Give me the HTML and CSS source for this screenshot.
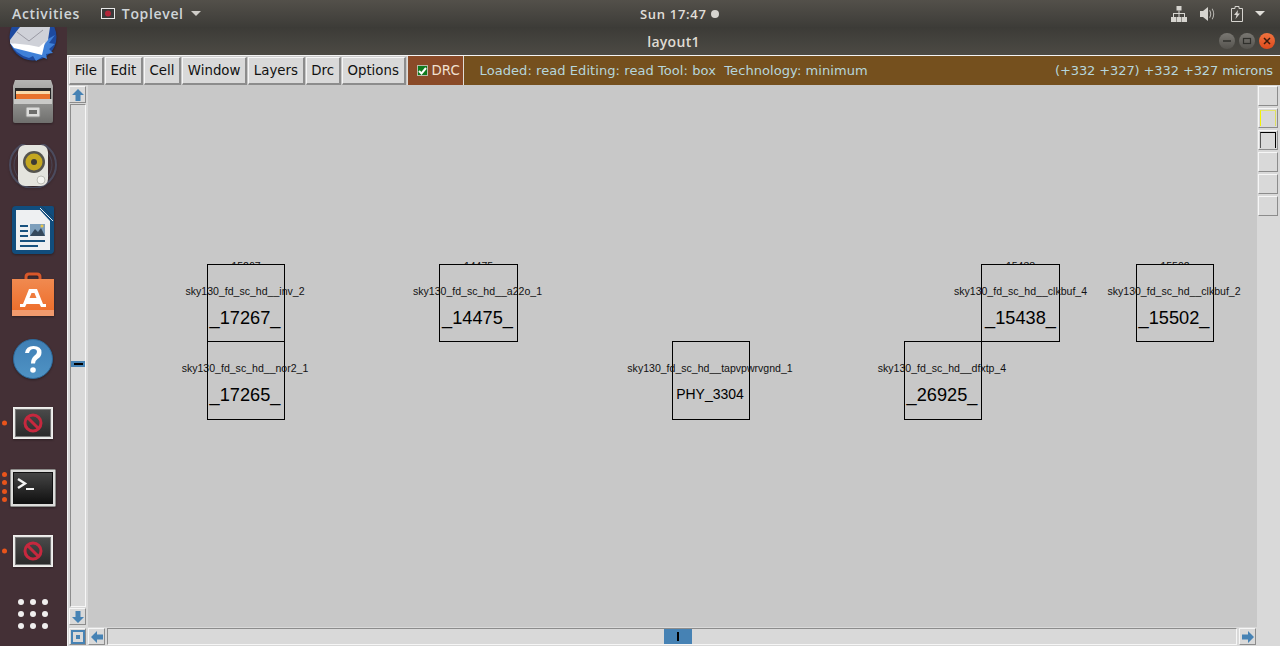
FILE: index.html
```html
<!DOCTYPE html>
<html lang="en">
<head>
<meta charset="utf-8">
<title>layout1</title>
<link rel="stylesheet" href="styles.css">
</head>
<body>
<header class="topbar">
  <div class="tb-left">
    <span class="tb-text">Activities</span>
    <span class="tb-app">
      <svg class="tb-appicon" width="14" height="11" viewBox="0 0 14 11"><rect x=".5" y=".5" width="13" height="10" fill="#3a3a3a" stroke="#e8e8e8"/><circle cx="7" cy="5.5" r="3" fill="#b3263a"/></svg>
      <span class="tb-text">Toplevel</span>
      <svg width="10" height="5" viewBox="0 0 10 5"><path d="M0 0h10L5 5z" fill="#cfcdc8"/></svg>
    </span>
  </div>
  <div class="tb-clock"><span>Sun 17:47</span><i class="tb-dot"></i></div>
  <div class="tb-right">
    <svg width="16" height="16" viewBox="0 0 16 16" fill="#d6d4cf"><path d="M5.500 0h5v4.500h-5zM0 11h5v5H0zM5.500 11h5v5h-5zM11 11h5v5h-5z"/><path d="M7.500 4.500h1V7H14v4h-1V8H8.500v3h-1V8H3v3H2V7h5.500z"/></svg>
    <svg width="16" height="14" viewBox="0 0 16 14" fill="#d6d4cf"><path d="M0 4h3l5-4v14l-5-4H0z"/><path d="M10 3q2.500 4 0 8l-.800-.500q2-3.500 0-7zM12.500 1.500q3.500 5.500 0 11l-.800-.500q3-5 0-10z" opacity=".8"/></svg>
    <svg class="tb-batt" width="12" height="16" viewBox="0 0 12 16"><path d="M4 .5h4v2h3.500v13H.5v-13H4z" fill="none" stroke="#d6d4cf"/><path d="M7 4 3 9h2.500L4.500 13 9 7.500H6.500z" fill="#d6d4cf"/></svg>
    <svg width="10" height="5" viewBox="0 0 10 5"><path d="M0 0h10L5 5z" fill="#e0ded9"/></svg>
  </div>
</header>

<div class="desktop">
  <nav class="dock">
    <div class="dock-item dock-clip">
      <svg class="tbird" width="48" height="36" viewBox="0 0 48 36"><circle cx="24" cy="10" r="23.500" fill="#1d4aa0"/><path d="M1 16Q6 27 20 31l4-2 3 5 6-4 5 2-1-5 7-1-4-4 6-5-6-1 6-8-14 8-12 6z" fill="#3f80d8"/><path d="M1 13 7 5 11 0H41L39 13 31 23 1 16z" fill="#cfd1d8"/><path d="M8 5 20 14 34 3" fill="none" stroke="#9a9aa4"/><path d="M1 16 5 21 33 28 36 15 30 20 20 18z" fill="#fff"/></svg>
    </div>
    <div class="dock-item">
      <svg width="42" height="44" viewBox="0 0 42 44"><defs><linearGradient id="cab" x1="0" y1="0" x2="0" y2="1"><stop offset="0" stop-color="#b5b5b3"/><stop offset="1" stop-color="#6f6f6d"/></linearGradient></defs><path d="M3 0h36l2 6v35q0 2-2 2H3q-2 0-2-2V6z" fill="url(#cab)"/><rect x="3" y="8" width="36" height="13" fill="#262626"/><rect x="4" y="11" width="34" height="4" fill="#f9d9a8"/><rect x="4" y="14" width="34" height="7" fill="#e8722b"/><rect x="2" y="19" width="38" height="5" fill="#c9c9c7"/><rect x="14" y="27" width="14" height="10" rx="1" fill="#dcdcda" stroke="#8c8c8a"/><rect x="17" y="30" width="8" height="4" fill="#6d6d6b"/></svg>
    </div>
    <div class="dock-item">
      <svg width="48" height="44" viewBox="0 0 48 44"><circle cx="24" cy="21" r="23" fill="none" stroke="#5a6c8c" stroke-width="2" opacity=".5"/><circle cx="24" cy="21" r="19" fill="none" stroke="#5a6c8c" opacity=".4"/><rect x="9" y="1" width="30" height="41" rx="7" fill="#e4e4de"/><circle cx="25" cy="18" r="11" fill="#55544e"/><circle cx="25" cy="18" r="8.500" fill="#c4a720"/><circle cx="25" cy="18" r="3" fill="#3c3b35"/><circle cx="32" cy="36" r="4" fill="#f4f4f0" stroke="#bdbdb6"/></svg>
    </div>
    <div class="dock-item">
      <svg width="42" height="48" viewBox="0 0 42 48"><path d="M4 0h26l12 12v32q0 4-4 4H4q-4 0-4-4V4q0-4 4-4z" fill="#114d7d"/><path d="M30 0h10q2 0 2 2v10z" fill="#114d7d"/><path d="M4 4h24l10 11v29H4z" fill="#eef0f2"/><path d="M28 2 41 15" stroke="#eef0f2" stroke-width="1"/><path d="M8 19h8v2H8zM8 24h8v2H8zM8 29h8v2H8zM8 34h25v2H8zM8 39h18v2H8z" fill="#18527f"/><rect x="18" y="18" width="15" height="12" fill="#7d9fbc"/><path d="M18 30l5-7 3 3 3-4 4 8z" fill="#35495c"/><circle cx="30" cy="20" r="1.500" fill="#e8c64c"/></svg>
    </div>
    <div class="dock-item">
      <svg width="42" height="44" viewBox="0 0 42 44"><defs><linearGradient id="bag" x1="0" y1="0" x2="0" y2="1"><stop offset="0" stop-color="#f08a50"/><stop offset="1" stop-color="#ee6a26"/></linearGradient></defs><path d="M14 10V5q0-3 3-3h8q3 0 3 3v5" fill="none" stroke="#d8572a" stroke-width="3"/><rect y="7" width="42" height="37" fill="url(#bag)"/><rect y="38" width="42" height="6" fill="#f19a6d"/><path d="M17 17h8l6 15h3v3h-5l-1.500-3h-13L13 35H8v-3h3zM19.500 21l-2 5h7l-2-5z" fill="#fff"/></svg>
    </div>
    <div class="dock-item">
      <svg class="nudge" width="40" height="40" viewBox="0 0 40 40"><defs><linearGradient id="hlp" x1="0" y1="0" x2="0" y2="1"><stop offset="0" stop-color="#3f7fb5"/><stop offset="1" stop-color="#4f93c4"/></linearGradient></defs><circle cx="20" cy="20" r="19.500" fill="url(#hlp)" stroke="#2e6a9b"/><path d="M12 14q1-7 8.500-7 8 0 8 6.500 0 4-4 6.500-2.500 1.500-2.500 4.500h-4q0-5 3-7.500 3-2 3-4 0-3-3.500-3t-4.500 4z" fill="#fff"/><circle cx="20" cy="31" r="2.800" fill="#fff"/></svg>
    </div>
    <div class="dock-item">
      <i class="pips"><b></b></i>
      <svg class="nudge" width="40" height="32" viewBox="0 0 40 32"><use href="#nosign"/></svg>
    </div>
    <div class="dock-item">
      <i class="pips"><b></b><b></b><b></b><b></b></i>
      <svg class="nudge-more" width="46" height="38" viewBox="0 0 46 38"><defs><linearGradient id="term" x1="0" y1="0" x2="0" y2="1"><stop offset="0" stop-color="#454545"/><stop offset="1" stop-color="#111"/></linearGradient></defs><rect x=".5" y=".5" width="45" height="37" rx="1" fill="#dcdcda" stroke="#8c8c8a"/><rect x="3" y="3" width="40" height="32" fill="#111"/><rect x="4" y="4" width="38" height="30" fill="url(#term)"/><path d="M8 10 15 14.500 8 19" fill="none" stroke="#f2f2f2" stroke-width="2.400"/><rect x="16" y="19" width="8" height="2" fill="#f2f2f2"/></svg>
    </div>
    <div class="dock-item">
      <i class="pips"><b></b></i>
      <svg class="nudge" width="40" height="32" viewBox="0 0 40 32"><use href="#nosign"/></svg>
    </div>
    <div class="dock-grid"><i></i><i></i><i></i><i></i><i></i><i></i><i></i><i></i><i></i></div>
    <svg class="defs" width="0" height="0"><defs><linearGradient id="nsg" x1="0" y1="0" x2="0" y2="1"><stop offset="0" stop-color="#4a4a4a"/><stop offset="1" stop-color="#2a2a2a"/></linearGradient><g id="nosign"><rect x=".5" y=".5" width="39" height="31" fill="#e6e6e4" stroke="#f0f0ee"/><rect x="2.500" y="2.500" width="35" height="27" fill="url(#nsg)" stroke="#777"/><circle cx="20" cy="16" r="8" fill="none" stroke="#c6283e" stroke-width="3"/><path d="M14.500 10.500 25.500 21.500" stroke="#c6283e" stroke-width="3"/></g></defs></svg>
  </nav>

  <main class="window">
    <div class="titlebar">
      <span class="title">layout1</span>
      <div class="wm">
        <span class="wm-btn"><svg width="10" height="10" viewBox="0 0 10 10"><path d="M1 5h8" stroke="#2f2f2b" stroke-width="1.500"/></svg></span>
        <span class="wm-btn"><svg width="10" height="10" viewBox="0 0 10 10"><rect x="1.500" y="2.500" width="7" height="5" fill="none" stroke="#2f2f2b" stroke-width="1.200"/></svg></span>
        <span class="wm-btn wm-close"><svg width="10" height="10" viewBox="0 0 10 10"><path d="M2 2 8 8M8 2 2 8" stroke="#3a1a0c" stroke-width="1.500"/></svg></span>
      </div>
    </div>
    <div class="app">
      <div class="menubar">
        <span class="menu">File</span>
        <span class="menu">Edit</span>
        <span class="menu">Cell</span>
        <span class="menu">Window</span>
        <span class="menu">Layers</span>
        <span class="menu">Drc</span>
        <span class="menu">Options</span>
        <span class="drc"><i class="check"><svg width="9" height="8" viewBox="0 0 9 8"><path d="M1 4 3.500 6.500 8 1" fill="none" stroke="#fff" stroke-width="2"/></svg></i>DRC</span>
        <div class="status">
          <span class="status-left">Loaded: read Editing: read Tool: box&nbsp; Technology: minimum</span>
          <span class="status-right">(+332 +327) +332 +327 microns</span>
        </div>
      </div>
      <div class="work">
        <div class="vscroll">
          <span class="arrow"><svg width="14" height="14" viewBox="0 0 14 14"><path d="M7 1 13 7H9.500V13H4.500V7H1z" fill="#4682b4"/></svg></span>
          <div class="vtrough"><span class="vthumb"><i></i></span></div>
          <span class="arrow"><svg width="14" height="14" viewBox="0 0 14 14"><path d="M7 13 13 7H9.500V1H4.500V7H1z" fill="#4682b4"/></svg></span>
        </div>
        <div class="canvas">
          <div class="cell c1"><span class="tick">15267</span><span class="cell-type">sky130_fd_sc_hd__inv_2</span><span class="cell-name">_17267_</span></div>
          <div class="cell c2"><span class="tick">14475</span><span class="cell-type">sky130_fd_sc_hd__a22o_1</span><span class="cell-name">_14475_</span></div>
          <div class="cell c3"><span class="tick">15438</span><span class="cell-type">sky130_fd_sc_hd__clkbuf_4</span><span class="cell-name">_15438_</span></div>
          <div class="cell c4"><span class="tick">15502</span><span class="cell-type">sky130_fd_sc_hd__clkbuf_2</span><span class="cell-name">_15502_</span></div>
          <div class="cell c5"><span class="cell-type">sky130_fd_sc_hd__nor2_1</span><span class="cell-name">_17265_</span></div>
          <div class="cell c6"><span class="cell-type">sky130_fd_sc_hd__tapvpwrvgnd_1</span><span class="cell-name small">PHY_3304</span></div>
          <div class="cell c7"><span class="cell-type">sky130_fd_sc_hd__dfxtp_4</span><span class="cell-name">_26925_</span></div>
        </div>
        <div class="tools">
          <span class="tool"></span>
          <span class="tool"><i class="swatch yellow"></i></span>
          <span class="tool"><i class="swatch black"></i></span>
          <span class="tool"></span>
          <span class="tool"></span>
          <span class="tool"></span>
        </div>
      </div>
      <div class="hbar">
        <span class="arrow"><svg width="14" height="14" viewBox="0 0 14 14"><rect x="1" y="1" width="12" height="12" fill="none" stroke="#4682b4" stroke-width="2"/><rect x="5" y="5" width="4" height="4" fill="#4682b4"/></svg></span>
        <span class="arrow"><svg width="14" height="14" viewBox="0 0 14 14"><path d="M1 7 7 1V4.500H13V9.500H7V13z" fill="#4682b4"/></svg></span>
        <div class="htrough"><span class="hthumb"><i></i></span></div>
        <span class="arrow"><svg width="14" height="14" viewBox="0 0 14 14"><path d="M13 7 7 1V4.500H1V9.500H7V13z" fill="#4682b4"/></svg></span>
      </div>
    </div>
  </main>
</div>
</body>
</html>
```
FILE: styles.css
```css
* { box-sizing: border-box; }
html, body { margin: 0; padding: 0; }
body {
  width: 1280px;
  height: 646px;
  overflow: hidden;
  background: #443036;
  font-family: "DejaVu Sans", sans-serif;
}
.topbar {
  height: 27px;
  display: grid;
  grid-template-columns: 628px auto 1fr;
  align-items: center;
  background: linear-gradient(#53504a, #3d3c38);
  color: #d6d4cf;
  padding: 0 15px 0 12px;
}
.tb-left { display: flex; align-items: center; gap: 21px; }
.tb-app { display: flex; align-items: center; gap: 7px; }
.tb-text {
  font: 600 14px "Open Sans", sans-serif;
  letter-spacing: .65px;
  color: #cfd5d8;
}
.tb-clock {
  display: flex;
  align-items: center;
  gap: 4px;
  font: 600 13px "Open Sans", sans-serif;
  letter-spacing: .7px;
  color: #e0ded9;
}
.tb-dot { width: 8px; height: 8px; border-radius: 50%; background: #d6d4cf; }
.tb-right { display: flex; align-items: center; justify-content: flex-end; gap: 13px; }
.tb-batt { margin: 0 -1px 0 2px; }

.desktop { display: flex; height: 619px; }

.dock {
  width: 67px;
  flex: none;
  background: #443036;
  display: flex;
  flex-direction: column;
  align-items: flex-start;
  overflow: hidden;
}
.dock-item {
  position: relative;
  height: 64px;
  width: 66px;
  display: flex;
  align-items: center;
  justify-content: center;
  flex: none;
}
.dock-item svg { filter: drop-shadow(0 1px 1px rgba(0, 0, 0, .35)); }
.dock-item .nudge { margin-top: 2px; }
.dock-item .nudge-more { margin-top: 3px; }
.dock-clip { height: 43px; align-items: flex-start; }
.pips {
  position: absolute;
  left: 2px;
  top: 50%;
  margin-top: 1px;
  transform: translateY(-50%);
  display: flex;
  flex-direction: column;
  gap: 3.3px;
}
.pips b { display: block; width: 5px; height: 5px; border-radius: 50%; background: #e9541b; }
.dock-grid {
  display: grid;
  grid-template-columns: repeat(3, 6px);
  gap: 6px;
  margin: 17px 0 0 18px;
}
.dock-grid i { width: 6px; height: 6px; border-radius: 50%; background: #f0eeee; }
.defs { position: absolute; }

.window { flex: 1; display: flex; flex-direction: column; min-width: 0; }
.titlebar {
  height: 28px;
  flex: none;
  position: relative;
  display: flex;
  align-items: center;
  justify-content: center;
  background: linear-gradient(#3c3b37, #4c4a44);
}
.title {
  font: 600 14px "Open Sans", sans-serif;
  letter-spacing: .3px;
  color: #dfdbd2;
}
.wm {
  position: absolute;
  right: 5px;
  top: 6px;
  display: flex;
  gap: 4px;
}
.wm-btn {
  width: 16px;
  height: 16px;
  border-radius: 50%;
  background: linear-gradient(#7a7873, #55534e);
  display: flex;
  align-items: center;
  justify-content: center;
}
.wm-close { background: linear-gradient(#f0733f, #dd4a1c); }

.app {
  flex: 1;
  min-height: 0;
  display: flex;
  flex-direction: column;
  background: #d9d9d9;
  border-left: 1px solid #f4f4f4;
  border-top: 1px solid #f4f4f4;
}
.menubar {
  height: 29px;
  flex: none;
  display: flex;
  align-items: stretch;
  padding-left: 1px;
  gap: 1px;
  font-size: 13.33px;
  background: #c8c8c8;
}
.menu {
  background: #d9d9d9;
  color: #111;
  display: flex;
  align-items: center;
  justify-content: center;
  padding: 0 4.7px;
  margin: 1px 0 0;
  border: 1px solid;
  border-color: #f6f6f6 #8c8c8c #8c8c8c #f6f6f6;
  border-width: 1px 2px 2px 1px;
}
.drc {
  display: flex;
  align-items: center;
  padding-left: 9px;
  width: 57px;
  flex: none;
  gap: 4px;
  color: #f0e0d2;
  background: #8a4a28;
  border: 1px solid #e0ddd8;
  border-width: 0 1px 0 1px;
}
.check {
  width: 11px;
  height: 11px;
  background: #0f7a1e;
  border: 1px solid #b9b9a8;
  display: flex;
  align-items: center;
  justify-content: center;
}
.status {
  flex: 1;
  display: flex;
  align-items: center;
  justify-content: space-between;
  padding: 0 7px 0 16px;
  background: #75501e;
  color: #b6d6dc;
  font-size: 13px;
  margin-left: -1px;
}
.status-left { letter-spacing: .07px; }
.status-right { letter-spacing: -.1px; }
.work { flex: 1; min-height: 0; display: flex; }
.vscroll {
  width: 20px;
  flex: none;
  display: flex;
  flex-direction: column;
  align-items: flex-start;
  gap: 1px;
  padding: 1px 0 2px 1px;
}
.arrow {
  width: 17px;
  height: 17px;
  flex: none;
  display: flex;
  align-items: center;
  justify-content: center;
  background: #d9d9d9;
  border: 1px solid;
  border-color: #f6f6f6 #8c8c8c #8c8c8c #f6f6f6;
}
.vtrough {
  flex: 1;
  width: 16px;
  margin-left: 1px;
  background: #d9d9d9;
  border: 1px solid;
  border-color: #8c8c8c #f6f6f6 #f6f6f6 #8c8c8c;
  display: flex;
  flex-direction: column;
  padding-top: 256px;
}
.vthumb {
  height: 6px;
  background: #4682b4;
  display: flex;
  align-items: center;
  justify-content: center;
}
.vthumb i { width: 9px; height: 2px; background: #000; }
.canvas {
  flex: 1;
  position: relative;
  background: #c8c8c8;
  overflow: hidden;
}
.cell {
  position: absolute;
  width: 78px;
  height: 78px;
  border: 1px solid #000;
  display: flex;
  flex-direction: column;
  align-items: center;
}
.c1 { left: 119px; top: 179px; }
.c2 { left: 351px; top: 179px; width: 79px; }
.c3 { left: 893px; top: 179px; width: 79px; }
.c4 { left: 1048px; top: 179px; }
.c5 { left: 119px; top: 256px; height: 79px; }
.c6 { left: 584px; top: 256px; height: 79px; }
.c7 { left: 816px; top: 256px; height: 79px; }
.tick {
  position: absolute;
  left: 0;
  right: 0;
  top: -3px;
  height: 2px;
  overflow: hidden;
  text-align: center;
  font: 10.5px/8px "Liberation Sans", sans-serif;
  color: #111;
}
.cell-type {
  font: 10.55px/12px "Liberation Sans", sans-serif;
  color: #111;
  white-space: nowrap;
  margin: 20px 0 0 -2px;
}
.cell-name {
  font: 18.2px/22px "Liberation Sans", sans-serif;
  color: #000;
  white-space: nowrap;
  margin: 10px 0 0 -2px;
}
.c3 .cell-type, .c3 .cell-name { margin-left: 0; }
.cell-name.small { font-size: 14px; margin-top: 9px; }
.tools {
  width: 23px;
  flex: none;
  display: flex;
  flex-direction: column;
  gap: 2px;
  padding: 1px 0 0 1px;
}
.tool {
  width: 20px;
  height: 20px;
  padding: 1px;
  background: #d9d9d9;
  border: 1px solid;
  border-color: #f6f6f6 #8c8c8c #8c8c8c #f6f6f6;
}
.swatch {
  display: block;
  height: 100%;
  border: 1px solid;
  border-bottom: 0;
}
.swatch.yellow { border-color: #e4e46a #dede60 transparent #f4f400; }
.swatch.black { border-color: #000 #000 transparent #555; }
.hbar {
  height: 19px;
  flex: none;
  display: flex;
  align-items: center;
  gap: 2px;
  padding: 0 24px 0 1px;
}
.htrough {
  flex: 1;
  height: 17px;
  padding-left: 556px;
  background: #d9d9d9;
  border: 1px solid;
  border-color: #8c8c8c #f6f6f6 #f6f6f6 #8c8c8c;
  display: flex;
}
.hthumb {
  width: 28px;
  background: #4682b4;
  display: flex;
  align-items: center;
  justify-content: center;
}
.hthumb i { width: 2px; height: 9px; background: #000; }
```
